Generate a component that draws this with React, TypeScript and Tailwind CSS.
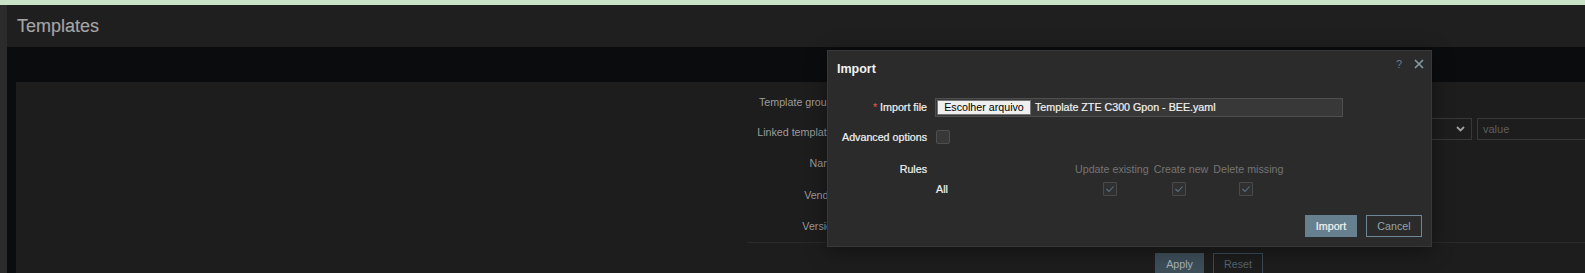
import React from "react";

function DisabledCheck() {
  return (
    <div className="w-[14px] h-[14px] border border-[#4a4a4a] bg-[#303030] rounded-[1px] mr-[4px] flex items-center justify-center">
      <svg width="12" height="12" viewBox="0 0 12 12">
        <polyline points="2.5,6 5,8.5 9.5,3.5" fill="none" stroke="#5a7485" strokeWidth="1.1" />
      </svg>
    </div>
  );
}

function RuleCol({ title }: { title: string }) {
  return (
    <div className="flex flex-col items-center">
      <div className="h-[14px] leading-[14px] text-[#747474] whitespace-nowrap">{title}</div>
      <div className="mt-[6px]">
        <DisabledCheck />
      </div>
    </div>
  );
}

function BgRow({ label, h, children }: { label: string; h: string; children?: React.ReactNode }) {
  return (
    <div className={`flex items-center shrink-0 ${h}`}>
      <div className="w-[822px] shrink-0 text-right text-[#9c9c9c] whitespace-nowrap">{label}</div>
      <div className="ml-[10px] flex-1 flex items-center">{children}</div>
    </div>
  );
}

const strong = "text-[#f2f2f2] [-webkit-text-stroke:0.2px_#f2f2f2]";

export default function App() {
  return (
    <div className="relative w-[1585px] h-[273px] overflow-hidden bg-[#0b0c0e] font-['Liberation_Sans',Arial,sans-serif] text-[10.7px]">
      <div className="h-[5px] bg-[#c8e3c8]" />
      <div className="flex h-[268px]">
        <div className="w-[7px] shrink-0 bg-[#2b2b2b]" />
        <div className="flex-1 min-w-0 flex flex-col overflow-hidden">
          <header className="h-[42px] shrink-0 bg-[#1f1f1f] flex items-center pl-[10px]">
            <h1 className="text-[18px] leading-none text-[#a5a5a5] [-webkit-text-stroke:0.15px_#a5a5a5]">Templates</h1>
          </header>
          <div className="h-[35px] shrink-0" />
          <div className="flex-1 min-h-0 ml-[9px] bg-[#1d1d1d] pt-[5px] flex flex-col overflow-hidden">
            <BgRow label="Template groups" h="h-[30px]" />
            <div className="flex h-[30px] shrink-0">
              <div className="w-[822px] shrink-0 text-right text-[#9c9c9c] whitespace-nowrap self-center">Linked templates</div>
              <div className="ml-[10px] flex shrink-0 gap-[5px] mt-[1px]">
                <div className="w-[437px] h-[22px] border border-[#383838]" />
                <div className="w-[182px] h-[22px] border border-[#383838] flex items-center justify-end pr-[6px]">
                  <svg width="9" height="6" viewBox="0 0 9 6">
                    <polyline points="1,1 4.5,4.5 8,1" fill="none" stroke="#a0a0a0" strokeWidth="1.8" />
                  </svg>
                </div>
                <div className="w-[200px] h-[22px] border border-[#383838] flex items-center pl-[5px] text-[#5e5e5e] text-[11px]">
                  value
                </div>
              </div>
            </div>
            <BgRow label="Name" h="h-[32px]" />
            <BgRow label="Vendor" h="h-[32px]" />
            <BgRow label="Version" h="h-[30px]" />
            <div className="shrink-0 mt-[1px] ml-[731px] border-t border-[#2a2a2a] pt-[10px] pl-[408px] flex gap-[9px]">
              <div className="w-[49px] h-[22px] shrink-0 bg-[#3e4f5a] text-[#aab3b9] flex items-center justify-center">Apply</div>
              <div className="w-[50px] h-[22px] shrink-0 border border-[#3d4c56] text-[#56656e] flex items-center justify-center">Reset</div>
            </div>
          </div>
        </div>
      </div>

      {/* Import dialog */}
      <div className="absolute left-[827px] top-[50px] w-[605px] h-[197px] bg-[#2b2b2b] border border-[#383838] shadow-[0_4px_20px_rgba(0,0,0,0.4)] flex flex-col">
        <div className="h-[36px] shrink-0 flex justify-between">
          <div className="self-center pl-[9px] text-[12.5px] font-bold text-[#f2f2f2]">Import</div>
          <div className="self-start mt-[5px] pr-[7px] flex items-center gap-[12px]">
            <span className="text-[11px] text-[#6c7d88]">?</span>
            <svg width="10" height="10" viewBox="0 0 10 10">
              <path d="M1 1 L9 9 M9 1 L1 9" stroke="#8a9ba5" strokeWidth="1.6" />
            </svg>
          </div>
        </div>

        <div className="mt-[11px] flex items-center h-[19px]">
          <div className={`w-[99px] text-right whitespace-nowrap ${strong}`}>
            <span className="text-[#e45959] [-webkit-text-stroke:0px] mr-[3px]">*</span>Import file
          </div>
          <div className="ml-[8px] w-[408px] h-[19px] border border-[#4f4f4f] bg-[#383838] flex items-center pl-[1px]">
            <div className="w-[94px] h-[15px] bg-[#efefef] border border-[#767676] text-black flex items-center justify-center whitespace-nowrap">
              Escolher arquivo
            </div>
            <span className={`ml-[4px] whitespace-nowrap ${strong}`}>Template ZTE C300 Gpon - BEE.yaml</span>
          </div>
        </div>

        <div className="mt-[13px] flex items-center h-[14px]">
          <div className={`w-[99px] text-right whitespace-nowrap ${strong}`}>Advanced options</div>
          <div className="ml-[9px] w-[14px] h-[14px] border border-[#4f4f4f] bg-[#383838] rounded-[2px]" />
        </div>

        <div className="mt-[18px] flex">
          <div className={`w-[99px] text-right h-[14px] leading-[14px] ${strong}`}>Rules</div>
          <div className="ml-[8px] flex gap-[5px]">
            <div className="w-[135px] flex flex-col">
              <div className="h-[14px]" />
              <div className={`mt-[6px] h-[14px] leading-[14px] pl-[1px] ${strong}`}>All</div>
            </div>
            <RuleCol title="Update existing" />
            <RuleCol title="Create new" />
            <RuleCol title="Delete missing" />
          </div>
        </div>

        <div className="mt-[19px] flex justify-end gap-[9px] pr-[9px]">
          <div className={`w-[52px] h-[22px] bg-[#67808f] flex items-center justify-center ${strong}`}>Import</div>
          <div className="w-[56px] h-[22px] border border-[#6f8795] text-[#93a4ae] flex items-center justify-center">Cancel</div>
        </div>
      </div>
    </div>
  );
}
